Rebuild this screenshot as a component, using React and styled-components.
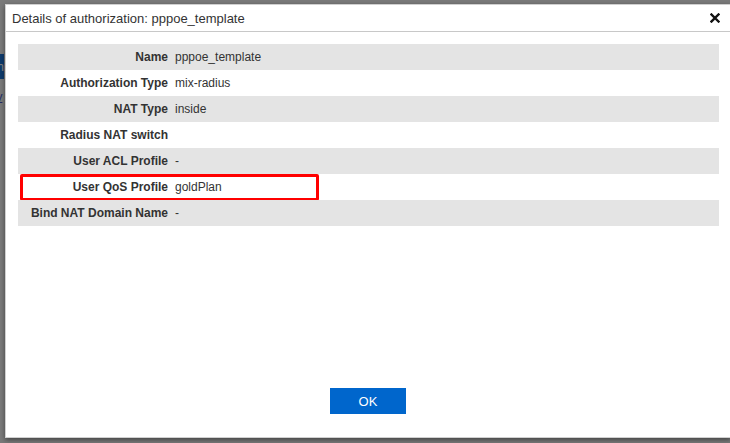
import React from "react";
import styled, { createGlobalStyle } from "styled-components";

const rows = [
  { label: "Name", value: "pppoe_template" },
  { label: "Authorization Type", value: "mix-radius" },
  { label: "NAT Type", value: "inside" },
  { label: "Radius NAT switch", value: "" },
  { label: "User ACL Profile", value: "-" },
  { label: "User QoS Profile", value: "goldPlan", marked: true },
  { label: "Bind NAT Domain Name", value: "-" }
];

function App() {
  return (
    <Screen>
      <GlobalStyle />
      <BackPage>
        <BackButton>Search</BackButton>
        <BackLink>gateway</BackLink>
      </BackPage>
      <Backdrop />
      <Dialog>
        <Header>
          <Title>Details of authorization: pppoe_template</Title>
          <CloseButton aria-label="close">
            <svg width="10" height="10" viewBox="0 0 10 10">
              <path
                d="M1.5 1.5 L8.5 8.5 M8.5 1.5 L1.5 8.5"
                stroke="#111"
                strokeWidth="2.4"
                strokeLinecap="square"
              />
            </svg>
          </CloseButton>
        </Header>
        <Body>
          <Table>
            {rows.map((row, i) => (
              <Row key={row.label} striped={i % 2 === 0}>
                <Label>{row.label}</Label>
                <Value>{row.value}</Value>
                {row.marked && <Highlight />}
              </Row>
            ))}
          </Table>
        </Body>
        <Footer>
          <OkButton>OK</OkButton>
        </Footer>
      </Dialog>
    </Screen>
  );
}

export default App;

const GlobalStyle = createGlobalStyle`
  html, body {
    margin: 0;
    padding: 0;
    overflow: hidden;
  }
  body {
    font-family: "Liberation Sans", Arial, sans-serif;
    color: #333;
  }
`;

const Screen = styled.div`
  position: relative;
  width: 730px;
  height: 443px;
  overflow: hidden;
  background: #f4f4f4;
`;

const BackPage = styled.div`
  display: flex;
  flex-direction: column;
  align-items: flex-start;
  gap: 10px;
  padding: 54px 0 0 0;
  margin-left: -52px;
`;

const BackButton = styled.div`
  width: 56px;
  height: 25px;
  line-height: 25px;
  background: #1d74d6;
  color: #fff;
  font-size: 13px;
  text-align: right;
`;

const BackLink = styled.a`
  color: #4b5fd0;
  font-size: 13px;
  text-decoration: underline;
  padding-left: 6px;
`;

const Backdrop = styled.div`
  position: absolute;
  inset: 0;
  background: rgba(0, 0, 0, 0.5);
`;

const Dialog = styled.div`
  position: absolute;
  left: 5px;
  top: 4px;
  width: 726px;
  height: 434px;
  box-sizing: border-box;
  background: #fff;
  border: 1px solid #d0d0d0;
  box-shadow: 0 2px 5px rgba(0, 0, 0, 0.45);
  display: flex;
  flex-direction: column;
`;

const Header = styled.div`
  height: 26px;
  display: flex;
  align-items: center;
  justify-content: space-between;
  padding: 0 10px 0 6px;
  border-bottom: 1px solid #c8c8c8;
`;

const Title = styled.div`
  font-size: 13px;
  color: #333;
  padding-top: 1px;
`;

const CloseButton = styled.div`
  width: 10px;
  height: 10px;
  display: flex;
  margin-top: -1px;
`;

const Body = styled.div`
  padding: 12px 11px 0 12px;
`;

const Table = styled.div`
  display: flex;
  flex-direction: column;
`;

const Row = styled.div`
  position: relative;
  display: grid;
  grid-template-columns: 157px 1fr;
  height: 26px;
  align-items: center;
  font-size: 12px;
  background: ${p => (p.striped ? "#e4e4e4" : "#fff")};
`;

const Label = styled.div`
  text-align: right;
  font-weight: bold;
  padding-right: 7px;
  color: #333;
`;

const Value = styled.div`
  color: #333;
`;

const Highlight = styled.div`
  position: absolute;
  left: 2px;
  top: 0;
  width: 299px;
  height: 27px;
  box-sizing: border-box;
  border: 3px solid #ff0000;
  border-radius: 2px;
`;

const Footer = styled.div`
  margin-top: auto;
  display: flex;
  justify-content: center;
  padding-bottom: 23px;
`;

const OkButton = styled.button`
  width: 76px;
  height: 26px;
  border: none;
  background: #0066cc;
  color: #fff;
  font-family: "Liberation Sans", Arial, sans-serif;
  font-size: 13px;
  padding: 0;
`;
